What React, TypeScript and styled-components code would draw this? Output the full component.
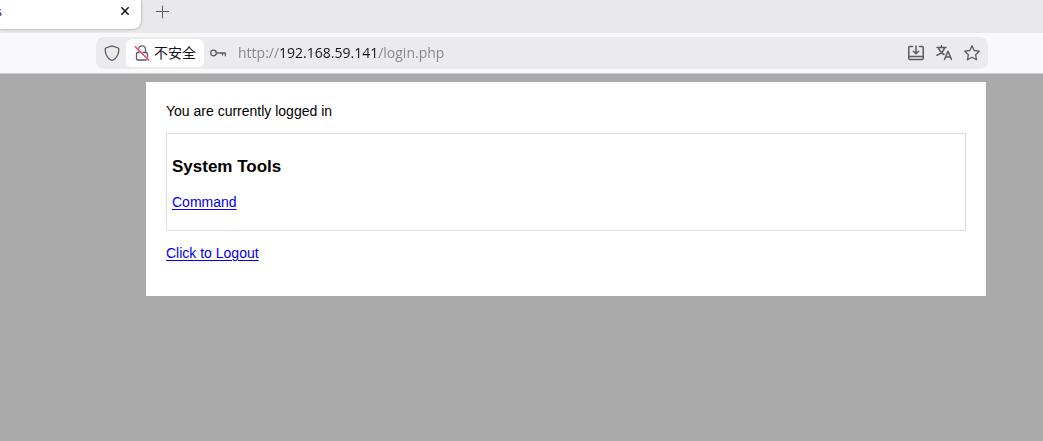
import React from "react";
import styled, { createGlobalStyle } from "styled-components";

const GlobalStyle = createGlobalStyle`
  *, *::before, *::after { box-sizing: border-box; }
  html { background: #aaaaaa; }
  body { margin: 0; font-family: "Liberation Sans", Arial, sans-serif; }
`;

const uiFont = `"Open Sans", "Noto Sans CJK SC", sans-serif`;

const TabStrip = styled.header`
  display: flex;
  align-items: flex-start;
  height: 33px;
  background: #e9e9eb;
`;

const Tab = styled.div`
  display: flex;
  align-items: flex-start;
  justify-content: space-between;
  width: 141px;
  height: 29px;
  padding-right: 8px;
  background: #ffffff;
  border-bottom-right-radius: 8px;
  box-shadow: 0 0 3px rgba(0, 0, 0, 0.4);
`;

const TabTitle = styled.span`
  display: flex;
  justify-content: flex-end;
  width: 2px;
  overflow: hidden;
  color: #15141a;
  font: 13px/22px ${uiFont};
`;

const IconButton = styled.button<{ $width?: number; $height?: number }>`
  display: flex;
  flex: none;
  align-items: center;
  justify-content: center;
  width: ${(p) => p.$width ?? 28}px;
  height: ${(p) => p.$height ?? 28}px;
  padding: 0;
  border: 0;
  background: none;
  color: #5b5b66;
`;

const Toolbar = styled.div`
  height: 41px;
  padding: 4px 55px 4px 96px;
  background: #f9f9fb;
  border-bottom: 1px solid #cccccc;
`;

const AddressBar = styled.div`
  display: flex;
  align-items: center;
  height: 32px;
  padding: 0 2px;
  border-radius: 8px;
  background: #ebebed;
`;

const SecurityChip = styled.button`
  display: flex;
  flex: none;
  align-items: center;
  gap: 4px;
  height: 28px;
  padding: 0 8px 0 8px;
  border: 0;
  border-radius: 6px;
  background: #ffffff;
  color: #15141a;
  font: 14px/20px "Noto Sans CJK SC", sans-serif;
`;

const ChipLabel = styled.span`
  padding-bottom: 2px;
`;

const Address = styled.input`
  flex: 1;
  min-width: 0;
  height: 24px;
  margin-left: 6px;
  padding: 0;
  border: 0;
  outline: 0;
  background: linear-gradient(90deg, #858588 0 42px, #15141a 42px 141px, #858588 141px);
  background-clip: text;
  -webkit-background-clip: text;
  -webkit-text-fill-color: transparent;
  font: 14px/24px ${uiFont};
`;

const Page = styled.div`
  padding: 8px 57px 8px 146px;
`;

const Panel = styled.main`
  padding: 20px 20px 34px;
  background: #ffffff;
  color: #000000;
  font-size: 14px;
  line-height: 18px;
`;

const Status = styled.p`
  margin: 0 0 13px;
`;

const Tools = styled.section`
  margin-bottom: 13px;
  padding: 24px 5px 19px;
  border: 1px solid #dddddd;
`;

const Heading = styled.h3`
  margin: 0 0 17px;
  font-size: 17px;
  line-height: 18px;
`;

const Link = styled.a`
  display: block;
  width: fit-content;
  color: #0000ee;
  text-decoration: underline;
  text-underline-offset: 2px;
`;

const Icon = ({ size = 16, children }: { size?: number; children: React.ReactNode }) => (
  <svg
    width={size}
    height={size}
    viewBox={`0 0 ${size} ${size}`}
    fill="none"
    stroke="currentColor"
    strokeWidth="1.3"
    strokeLinecap="round"
    strokeLinejoin="round"
    aria-hidden="true"
  >
    {children}
  </svg>
);

export default function App() {
  return (
    <>
      <GlobalStyle />
      <TabStrip>
        <Tab>
          <TabTitle>s</TabTitle>
          <IconButton $width={16} $height={22} aria-label="Close tab">
            <svg width="16" height="16" viewBox="0 0 16 16" fill="none" stroke="#15141a" strokeWidth="1.5" aria-hidden="true">
              <path d="M4.3 4.3l7.4 7.4M11.7 4.3l-7.4 7.4" />
            </svg>
          </IconButton>
        </Tab>
        <IconButton $width={42} $height={24} aria-label="New tab">
          <Icon>
            <path d="M8.5 2v12M2.500 7.500h12" strokeWidth="1" />
          </Icon>
        </IconButton>
      </TabStrip>
      <Toolbar>
        <AddressBar>
          <IconButton aria-label="Tracking protection">
            <Icon>
              <path d="M8 .8 1.8 3c-.4.2-.6.5-.6.9 0 5 1.600 8.900 6.100 11.300.5.3.9.3 1.400 0 4.500-2.400 6.100-6.300 6.100-11.300 0-.4-.2-.7-.6-.9z" />
            </Icon>
          </IconButton>
          <SecurityChip>
            <Icon>
              <g stroke="#5b5b66">
                <path d="M4.500 7.500V4.300a3.500 3.500 0 0 1 7 0v3.200M3.800 7.500h8.400c.8 0 1.300.5 1.300 1.300v4.900c0 .8-.5 1.300-1.300 1.300H3.800c-.8 0-1.300-.5-1.300-1.300V8.800c0-.8.5-1.300 1.300-1.300z" />
              </g>
              <path d="M2 2.500 14.800 15.300" stroke="#ffffff" strokeWidth="2" />
              <path d="M1.300 1.800 14.800 15.300" stroke="#f0375f" />
            </Icon>
            <ChipLabel>不安全</ChipLabel>
          </SecurityChip>
          <IconButton aria-label="Saved logins">
            <Icon>
              <circle cx="3.500" cy="8" r="2.800" />
              <path d="M6.300 8h9.100v2.800M12.500 8v2" />
            </Icon>
          </IconButton>
          <Address aria-label="Address" defaultValue="http://192.168.59.141/login.php" spellCheck={false} />
          <IconButton aria-label="Install page">
            <Icon>
              <path d="M4.500 1.500H1.800a1 1 0 0 0-1 1v11a1 1 0 0 0 1 1h12.400a1 1 0 0 0 1-1v-11a1 1 0 0 0-1-1h-2.700M.8 11.500h14.400M8 1v7.500M5.300 6.200 8 8.800l2.700-2.600" strokeWidth="1.500" />
            </Icon>
          </IconButton>
          <IconButton aria-label="Translate page">
            <Icon>
              <path d="M1 2.500h9M5.500.8v1.700M2.500 3c1 3 3 5.200 5.500 6.500M8.500 3C7.500 6.200 5 8.700 1 10.200M8.500 14.500 12 6.300l3.500 8.200M9.700 12h4.600" strokeWidth="1.500" />
            </Icon>
          </IconButton>
          <IconButton aria-label="Bookmark page">
            <Icon>
              <path d="M8 .9l2.200 4.600 5 .7-3.600 3.500.9 5L8 12.300l-4.500 2.400.9-5L.8 6.200l5-.7z" />
            </Icon>
          </IconButton>
        </AddressBar>
      </Toolbar>
      <Page>
        <Panel>
          <Status>You are currently logged in</Status>
          <Tools>
            <Heading>System Tools</Heading>
            <Link href="#command">Command</Link>
          </Tools>
          <Link href="#logout">Click to Logout</Link>
        </Panel>
      </Page>
    </>
  );
}
